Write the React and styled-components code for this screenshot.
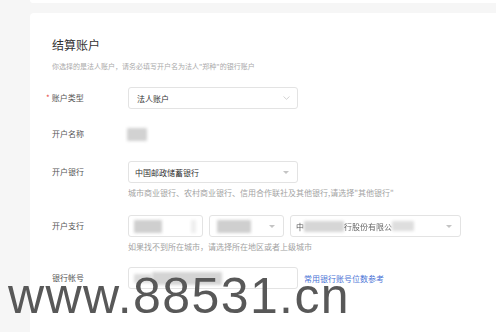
import React from "react";
import styled, { createGlobalStyle } from "styled-components";

const GlobalStyle = createGlobalStyle`
  html, body {
    margin: 0;
    padding: 0;
    background: #f6f6f6;
    overflow: hidden;
  }
  body {
    font-family: "Noto Sans CJK SC", "Noto Sans", sans-serif;
  }
`;

const Page = styled.div`
  position: relative;
  width: 496px;
  height: 332px;
  overflow: hidden;
  padding-left: 30px;
  box-sizing: border-box;
`;

const TopCard = styled.div`
  width: 490px;
  height: 3px;
  background: #fff;
  border-radius: 0 0 4px 4px;
`;

const Card = styled.section`
  margin-top: 10px;
  width: 490px;
  height: 340px;
  background: #fff;
  border-radius: 4px;
  padding: 24px 0 0 22px;
  box-sizing: border-box;
`;

const Title = styled.h2`
  margin: 0;
  font-size: 12px;
  line-height: 16px;
  font-weight: 400;
  color: #333;
`;

const Subtitle = styled.p`
  margin: 8px 0 16px;
  font-size: 7px;
  line-height: 10px;
  color: #aaa;
`;

const Item = styled.div`
  display: flex;
  align-items: flex-start;
  margin-bottom: ${(p) => p.$gap || 15}px;
`;

const Label = styled.div`
  width: 76px;
  flex-shrink: 0;
  height: 22px;
  line-height: 22px;
  font-size: 8px;
  color: #555;
`;

const Star = styled.span`
  color: #e8483f;
  margin-left: -6px;
  margin-right: 2px;
  font-size: 8px;
`;

const Control = styled.div`
  display: flex;
  flex-direction: column;
`;

const Line = styled.div`
  display: flex;
  align-items: center;
  gap: 6px;
`;

const Box = styled.div`
  position: relative;
  width: ${(p) => p.$w || 170}px;
  height: 22px;
  box-sizing: border-box;
  border: 1px solid #e3e3e3;
  border-radius: 3px;
  background: #fff;
  display: flex;
  align-items: center;
  padding: 0 ${(p) => p.$pad || 8}px;
  font-size: 8px;
  color: #333;
  overflow: hidden;
  white-space: nowrap;
`;

const Arrow = styled.span`
  position: absolute;
  right: 7px;
  top: 50%;
  transform: translateY(-50%);
  display: flex;
`;

const Caret = styled.span`
  position: absolute;
  right: 8px;
  top: 50%;
  margin-top: -1px;
  width: 0;
  height: 0;
  border-left: 3px solid transparent;
  border-right: 3px solid transparent;
  border-top: 3px solid #c4c4c4;
`;

const Help = styled.div`
  margin-top: 4px;
  font-size: 8px;
  line-height: 12px;
  color: #a3a3a3;
  white-space: nowrap;
`;

const Smudge = styled.span`
  display: inline-block;
  flex-shrink: 0;
  width: ${(p) => p.$w}px;
  height: ${(p) => p.$h || 12}px;
  margin-left: ${(p) => p.$ml || 0}px;
  background: ${(p) => p.$c || "#cfcfcf"};
  filter: blur(1.5px);
  border-radius: 1px;
`;

const Blurred = styled.span`
  filter: blur(${(p) => p.$b || 1}px);
  color: ${(p) => p.$c || "#555"};
`;

const NameValue = styled.div`
  height: 22px;
  display: flex;
  align-items: center;
  margin-left: -1px;
`;

const Link = styled.a`
  margin-left: 7px;
  font-size: 8px;
  color: #4a73d6;
  text-decoration: none;
  white-space: nowrap;
`;

const Watermark = styled.div`
  position: absolute;
  left: 8px;
  top: 271px;
  font-family: "Liberation Sans", Arial, sans-serif;
  font-size: 50px;
  line-height: 50px;
  letter-spacing: 1.4px;
  color: #585858;
  white-space: nowrap;
  pointer-events: none;
`;

function Chevron() {
  return (
    <svg width="7" height="4" viewBox="0 0 7 4">
      <path d="M0.5 0.5 L3.5 3.3 L6.5 0.5" fill="none" stroke="#c8c8c8" strokeWidth="0.8" />
    </svg>
  );
}

export default function App() {
  return (
    <Page>
      <GlobalStyle />
      <TopCard />
      <Card>
        <Title>结算账户</Title>
        <Subtitle>你选择的是法人账户，请务必填写开户名为法人"郑种"的银行账户</Subtitle>

        <Item $gap={14}>
          <Label>
            <Star>*</Star>账户类型
          </Label>
          <Box>
            法人账户
            <Arrow>
              <Chevron />
            </Arrow>
          </Box>
        </Item>

        <Item $gap={16}>
          <Label>开户名称</Label>
          <NameValue>
            <Smudge $w={20} $h={13} $c="#d2d2d2" />
          </NameValue>
        </Item>

        <Item $gap={16}>
          <Label>开户银行</Label>
          <Control>
            <Box $pad={6}>
              中国邮政储蓄银行
              <Caret />
            </Box>
            <Help>城市商业银行、农村商业银行、信用合作联社及其他银行,请选择"其他银行"</Help>
          </Control>
        </Item>

        <Item $gap={14}>
          <Label>开户支行</Label>
          <Control>
            <Line>
              <Box $w={75} $pad={5}>
                <Smudge $w={28} $h={13} />
                <Smudge $w={5} $h={13} $ml={29} $c="#eeeeee" />
              </Box>
              <Box $w={75} $pad={7}>
                <Smudge $w={34} $h={13} />
                <Caret />
              </Box>
              <Box $w={171} $pad={5}>
                <Blurred $b={0.6}>中</Blurred>
                <Smudge $w={40} $h={11} $c="#d6d6d6" />
                <Blurred $b={0.5} $c="#666">行股份有限公</Blurred>
                <Smudge $w={22} $h={10} $c="#dedede" />
                <Caret />
              </Box>
            </Line>
            <Help>如果找不到所在城市，请选择所在地区或者上级城市</Help>
          </Control>
        </Item>

        <Item>
          <Label>银行帐号</Label>
          <Line>
            <Box $pad={5}>
              <Smudge $w={18} $h={9} $c="#dcdcdc" />
              <Smudge $w={70} $h={13} $c="#d4d4d4" />
            </Box>
          </Line>
          <NameValue>
            <Link href="#">常用银行账号位数参考</Link>
          </NameValue>
        </Item>
      </Card>
      <Watermark>www.88531.cn</Watermark>
    </Page>
  );
}
